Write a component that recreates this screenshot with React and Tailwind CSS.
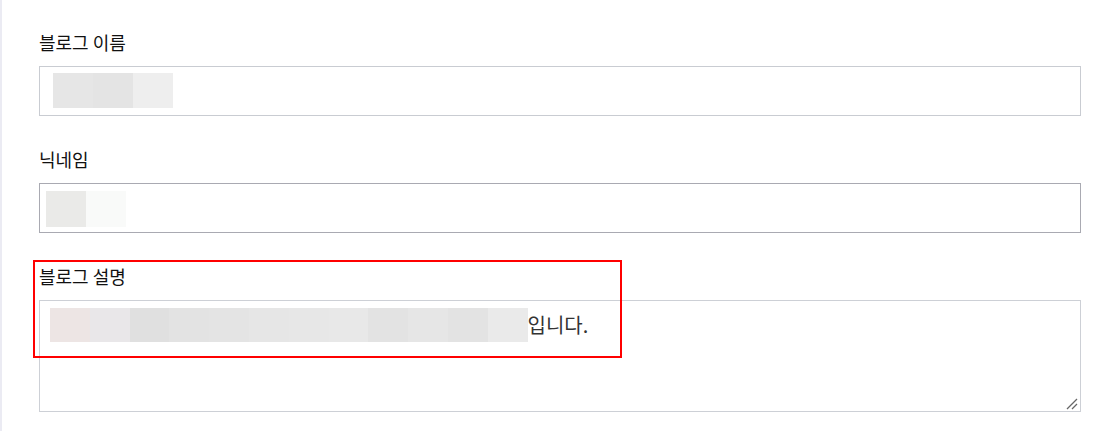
const nameBlocks = ['#e6e6e6', '#e4e4e4', '#eeeeee'];
const nickBlocks = ['#eaeae8', '#f9faf9'];
const descBlocks = [
  '#ede5e4', '#e9e7e9', '#e0e0e0', '#e3e3e3', '#e4e4e4', '#e6e6e6',
  '#e7e7e7', '#e8e8e8', '#e3e3e3', '#e6e6e6', '#e3e3e3', '#eaeaea',
];

// mosaic blocks standing in for blurred text
const Mosaic = ({ colors, w = 40, h = 35 }) => (
  <div className="flex">
    {colors.map((c, i) => (
      <div key={i} style={{ backgroundColor: c, width: w, height: h }} />
    ))}
  </div>
);

const Label = ({ children }) => (
  <div className="h-6 mb-3 text-[18px] leading-6 text-[#111]">{children}</div>
);

export default function App() {
  return (
    <div
      className="flex min-h-[431px] bg-white"
      style={{ fontFamily: '"Noto Sans CJK KR", "Noto Sans", sans-serif' }}
    >
      <div className="w-[2px] shrink-0 bg-[#ebebf3]" />
      <div className="relative flex-1 pl-[37px] pr-[29px] pt-[30px]">
        {/* 블로그 이름 */}
        <Label>블로그 이름</Label>
        <div className="h-[50px] border border-[#c9ccd2] pl-[13px] pt-[6px] mb-[31px]">
          <Mosaic colors={nameBlocks} />
        </div>

        {/* 닉네임 */}
        <Label>닉네임</Label>
        <div className="h-[50px] border border-[#a9aab2] pl-[6px] pt-[7px] mb-[31px]">
          <Mosaic colors={nickBlocks} h={36} />
        </div>

        {/* 블로그 설명 */}
        <Label>블로그 설명</Label>
        <div className="relative h-[112px] border border-[#cdd0d6] pl-[10px] pt-[7px]">
          <div className="flex items-center">
            <Mosaic colors={descBlocks} w={39.8} h={34} />
            <span className="text-[20px] leading-[34px] text-[#333]">입니다.</span>
          </div>
          <svg
            className="absolute right-[2px] bottom-[1px]"
            width="12"
            height="12"
            viewBox="0 0 12 12"
          >
            <path d="M1 11 L11 1 M6 11 L11 6" stroke="#666" strokeWidth="1.3" />
          </svg>
        </div>

        {/* annotation box */}
        <div className="absolute left-[31px] top-[260px] w-[589px] h-[98px] border-2 border-[#ff0000]" />
      </div>
    </div>
  );
}
